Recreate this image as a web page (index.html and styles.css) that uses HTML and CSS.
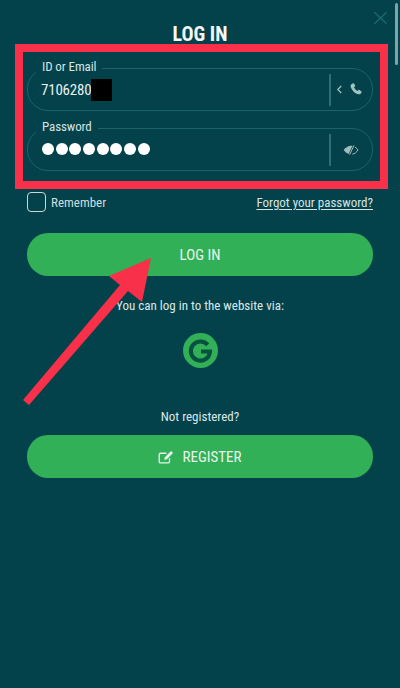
FILE: index.html
```html
<!DOCTYPE html>
<html lang="en">
<head>
<meta charset="utf-8">
<title>Log in</title>
<link rel="stylesheet" href="styles.css">
</head>
<body>
<main class="page">
  <header class="head">
    <h1 class="title">LOG IN</h1>
    <svg class="close" viewBox="0 0 16 16" aria-label="Close"><path d="M1 1.5 15 14.5M15 1.5 1 14.5"/></svg>
  </header>
  <form class="form">
    <div class="field">
      <span class="label">ID or Email</span>
      <div class="value"><span>7106280</span><span class="redact"></span></div>
      <div class="addon addon-phone">
        <svg class="chev" viewBox="0 0 8 10"><path d="M6 1 2 5l4 4"/></svg>
        <svg class="phone" viewBox="0 0 24 24"><path d="M6.6 2.2c.7-.4 1.5-.2 1.9.5l2 3.4c.4.6.2 1.4-.3 1.8L8.600 9.200c1 2.400 3.200 4.800 5.800 6.200l1.500-1.500c.5-.5 1.200-.6 1.800-.2l3.300 2.100c.7.400.9 1.300.4 2-.9 1.400-2.100 3.300-3.900 3.400C11 21.600 2.200 12.400 2.800 6.200 3 4.500 5.100 3.100 6.600 2.200Z"/></svg>
      </div>
    </div>
    <div class="field">
      <span class="label">Password</span>
      <div class="value dots"><i></i><i></i><i></i><i></i><i></i><i></i><i></i><i></i></div>
      <div class="addon">
        <svg class="eye" viewBox="0 0 24 16"><path class="eye-fill" d="M1 8c3-4 7-6.500 11-6.500.8 0 1.500.1 2.200.3L8.500 14C5.500 13 3 11 1 8Z"/><path class="eye-line" d="M14 14.300c3.500-.6 6.500-3 8.500-6.300-1.200-1.800-2.800-3.300-4.500-4.300M16.500 1 10 15"/></svg>
      </div>
    </div>
    <div class="options">
      <label class="remember"><span class="check"></span>Remember</label>
      <a class="forgot" href="#">Forgot your password?</a>
    </div>
    <button class="btn login" type="button">LOG IN</button>
  </form>
  <p class="via">You can log in to the website via:</p>
  <svg class="google" viewBox="0 0 34 34" aria-label="Google">
    <circle class="g-disc" cx="17" cy="17" r="17"/>
    <path class="g-mark" d="M24 11.500A9.300 9.300 0 1 0 26.200 18H17.500"/>
  </svg>
  <p class="not-reg">Not registered?</p>
  <button class="btn register" type="button">
    <svg class="edit" viewBox="0 0 18 16"><path class="edit-box" d="M13 9.500V13a1.800 1.800 0 0 1-1.800 1.800H3A1.800 1.800 0 0 1 1.200 13V5.500A1.800 1.800 0 0 1 3 3.700h6.500"/><path class="edit-pen" d="M14.800 1.200 17 3.300 10 10.500l-3 .8.700-3Z"/></svg>
    REGISTER
  </button>

  <div class="scroll-thumb"></div>
  <div class="mark-box"></div>
  <svg class="mark-arrow" viewBox="0 0 400 688"><path d="M29 405 23 400 120 285 109 276 151 258 142 302 128 291Z"/></svg>
</main>
</body>
</html>
```
FILE: styles.css
```css
* { box-sizing: border-box; }
html, body { margin: 0; height: 100%; }
body { background: #03424b; color: #e6f0ef; font-family: Roboto, sans-serif; font-stretch: 75%; overflow: hidden; }

.page { position: relative; height: 688px; padding: 0 27px; display: flex; flex-direction: column; align-items: stretch; }

.head { height: 68px; display: flex; justify-content: center; padding-top: 22px; }
.title { margin: 0; font-size: 20px; line-height: 24px; font-weight: 700; color: #f4f8f8; }
.close { position: absolute; top: 11px; right: 12px; width: 15px; height: 14px; fill: none; stroke: #1c6a6c; stroke-width: 1.6; }

.form { display: flex; flex-direction: column; }
.field { position: relative; height: 43px; margin-bottom: 17px; border: 1px solid #1d6367; border-radius: 21px; display: flex; align-items: center; justify-content: space-between; padding-left: 13px; }
.label { position: absolute; left: 8px; top: -10px; padding: 0 6px; background: #03424b; font-size: 13px; letter-spacing: -.1px; line-height: 16px; color: #d5e3e2; }
.value { display: flex; align-items: center; font-size: 15px; letter-spacing: -.2px; color: #e8f1f0; height: 22px; }
.value span:first-child { width: 50px; }
.redact { width: 21px; height: 22px; background: #000; }
.dots { gap: 1.700px; margin-left: 1px; margin-top: -1px; }
.dots i { width: 12px; height: 12px; border-radius: 50%; background: #fff; }
.addon { width: 43px; height: 32px; border-left: 2px solid #2d6f73; display: flex; align-items: center; justify-content: center; gap: 6px; padding-right: 2px; }
.addon-phone { padding-right: 4px; }
.chev { width: 7px; height: 9px; fill: none; stroke: #a9c6c5; stroke-width: 1.300; }
.phone { width: 14px; height: 14px; fill: #9fc4c1; margin-top: -1px; }
.eye { width: 16px; height: 12px; }
.eye-fill { fill: #9fbdbb; }
.eye-line { fill: none; stroke: #9fbdbb; stroke-width: 1.500; }

.options { display: flex; align-items: center; justify-content: space-between; height: 20px; margin-top: 4px; font-size: 13px; }
.remember { display: flex; align-items: center; gap: 5px; color: #cfdedd; }
.check { width: 19px; height: 20px; border: 1.500px solid #c8d9d8; border-radius: 4px; }
.forgot { color: #d5e3e2; text-decoration: underline; text-underline-offset: 2px; }

.btn { display: flex; align-items: center; justify-content: center; gap: 8px; width: 100%; height: 43px; border: 0; border-radius: 21px; background: #31b057; color: #e9f5ec; font: inherit; font-size: 15px; padding: 0; }
.login { margin-top: 21px; }
.register { height: 43px; }

.via { margin: 22px 0 0; text-align: center; font-size: 13px; line-height: 16px; color: #dce8e7; }
.google { display: block; width: 35px; height: 35px; margin: 19px auto 0; }
.g-disc { fill: #31b057; }
.g-mark { fill: none; stroke: #07513f; stroke-width: 4; }
.not-reg { margin: 41px 0 10px; text-align: center; font-size: 13px; line-height: 16px; color: #dce8e7; }
.edit { width: 16px; height: 14px; }
.edit-box { fill: none; stroke: #e9f5ec; stroke-width: 1.500; }
.edit-pen { fill: #e9f5ec; }

.scroll-thumb { position: absolute; top: 3px; right: 2px; width: 3px; height: 62px; border-radius: 2px; background: #7fa3a6; }
.mark-box { position: absolute; left: 15px; top: 44px; width: 373px; height: 145px; border: 8px solid #f9304a; }
.mark-arrow { position: absolute; inset: 0; width: 400px; height: 688px; fill: #f9304a; pointer-events: none; }
```
